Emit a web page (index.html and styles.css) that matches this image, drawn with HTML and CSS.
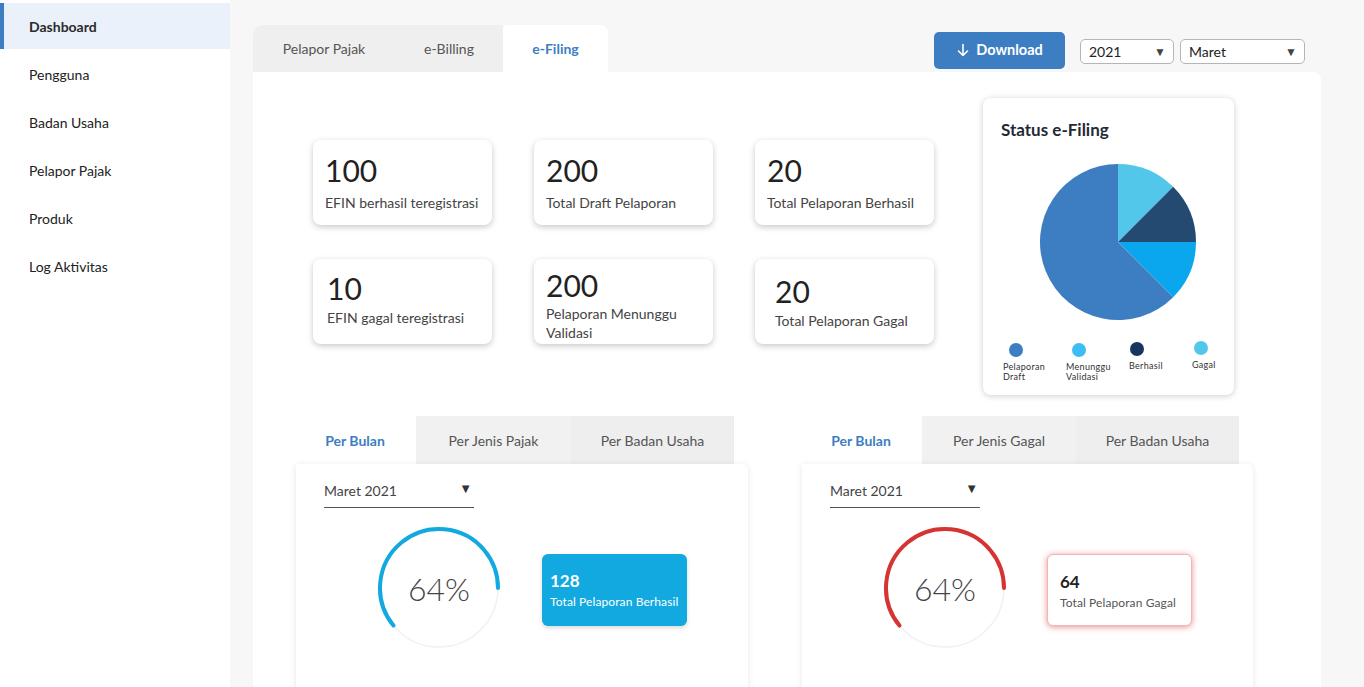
FILE: index.html
```html
<!DOCTYPE html>
<html lang="id">
<head>
<meta charset="utf-8">
<title>Dashboard e-Filing</title>
<link rel="stylesheet" href="styles.css">
</head>
<body>
<aside class="sidebar">
  <a class="nav-item active">Dashboard</a>
  <a class="nav-item">Pengguna</a>
  <a class="nav-item">Badan Usaha</a>
  <a class="nav-item">Pelapor Pajak</a>
  <a class="nav-item">Produk</a>
  <a class="nav-item">Log Aktivitas</a>
</aside>
<main class="main">
  <div class="topbar">
    <div class="tabs">
      <div class="tab t1">Pelapor Pajak</div>
      <div class="tab t2">e-Billing</div>
      <div class="tab active">e-Filing</div>
    </div>
    <div class="controls">
      <button class="btn-download">
        <svg width="14" height="14" viewBox="0 0 14 14" fill="none" stroke="#fff" stroke-width="1.6" stroke-linecap="round" stroke-linejoin="round"><path d="M7 1.5v11M2.5 8l4.5 4.5L11.5 8"/></svg>
        Download
      </button>
      <div class="select s-year">2021<span class="caret">▼</span></div>
      <div class="select s-month">Maret<span class="caret">▼</span></div>
    </div>
  </div>
  <section class="panel">
    <div class="top-section">
      <div class="stats">
        <div class="stat"><div class="num">100</div><div class="lbl">EFIN berhasil teregistrasi</div></div>
        <div class="stat"><div class="num">200</div><div class="lbl">Total Draft Pelaporan</div></div>
        <div class="stat"><div class="num">20</div><div class="lbl">Total Pelaporan Berhasil</div></div>
        <div class="stat s2"><div class="num">10</div><div class="lbl">EFIN gagal teregistrasi</div></div>
        <div class="stat s3"><div class="num">200</div><div class="lbl">Pelaporan Menunggu Validasi</div></div>
        <div class="stat s4"><div class="num">20</div><div class="lbl">Total Pelaporan Gagal</div></div>
      </div>
      <div class="status-card">
        <h2 class="status-title">Status e-Filing</h2>
        <svg class="pie" width="160" height="160" viewBox="0 0 160 160">
          <path d="M80 80 L80 2 A78 78 0 0 1 135.15 24.85 Z" fill="#52c7ea"/>
          <path d="M80 80 L135.15 24.85 A78 78 0 0 1 158 80 Z" fill="#244a72"/>
          <path d="M80 80 L158 80 A78 78 0 0 1 135.15 135.15 Z" fill="#0aa7ef"/>
          <path d="M80 80 L135.15 135.15 A78 78 0 1 1 80 2 Z" fill="#3d7ec2"/>
        </svg>
        <div class="legend">
          <div class="lg"><span class="dot" style="background:#3d7ec2"></span><span>Pelaporan<br>Draft</span></div>
          <div class="lg"><span class="dot" style="background:#3dbdf2"></span><span>Menunggu<br>Validasi</span></div>
          <div class="lg"><span class="dot" style="background:#17365f"></span><span>Berhasil</span></div>
          <div class="lg lg-last"><span class="dot" style="background:#52c7ea"></span><span>Gagal</span></div>
        </div>
      </div>
    </div>
    <div class="bottom-section">
      <div class="block">
        <div class="subtabs">
          <div class="subtab active">Per Bulan</div>
          <div class="subtab w155">Per Jenis Pajak</div>
          <div class="subtab w163 dark">Per Badan Usaha</div>
        </div>
        <div class="block-card">
          <div class="dropdown">Maret 2021<span class="dcaret">▼</span></div>
          <div class="gauge-row">
            <div class="gauge">
              <svg width="124" height="124" viewBox="0 0 124 124">
                <circle cx="62" cy="62" r="59" fill="none" stroke="#f1f1f1" stroke-width="1.5"/>
                <circle cx="62" cy="62" r="59" fill="none" stroke="#12a9e0" stroke-width="4" stroke-linecap="round" pathLength="100" stroke-dasharray="61 100" transform="rotate(140.5 62 62)"/>
              </svg>
              <span class="pct">64%</span>
            </div>
            <div class="info info-blue"><div class="inum">128</div><div class="ilbl">Total Pelaporan Berhasil</div></div>
          </div>
        </div>
      </div>
      <div class="block">
        <div class="subtabs">
          <div class="subtab active">Per Bulan</div>
          <div class="subtab w154">Per Jenis Gagal</div>
          <div class="subtab w163 dark">Per Badan Usaha</div>
        </div>
        <div class="block-card">
          <div class="dropdown">Maret 2021<span class="dcaret">▼</span></div>
          <div class="gauge-row">
            <div class="gauge">
              <svg width="124" height="124" viewBox="0 0 124 124">
                <circle cx="62" cy="62" r="59" fill="none" stroke="#f1f1f1" stroke-width="1.5"/>
                <circle cx="62" cy="62" r="59" fill="none" stroke="#d63333" stroke-width="4" stroke-linecap="round" pathLength="100" stroke-dasharray="61 100" transform="rotate(140.5 62 62)"/>
              </svg>
              <span class="pct">64%</span>
            </div>
            <div class="info info-red"><div class="inum">64</div><div class="ilbl">Total Pelaporan Gagal</div></div>
          </div>
        </div>
      </div>
    </div>
  </section>
</main>
</body>
</html>
```
FILE: styles.css
```css
* { box-sizing: border-box; }
html, body { margin: 0; padding: 0; }
body {
  background: #f7f7f7;
  font-family: Lato, "Noto Sans", "Liberation Sans", sans-serif;
  color: #333;
  display: flex;
  height: 687px;
  overflow: hidden;
}
.sidebar {
  width: 230px;
  flex: none;
  background: #fff;
  padding-top: 2px;
  display: flex;
  flex-direction: column;
}
.nav-item {
  height: 48px;
  display: flex;
  align-items: center;
  font-size: 14px;
  color: #222;
  border-left: 4px solid transparent;
  padding-left: 25px;
}
.nav-item.active {
  background: #eaf1fa;
  border-left-color: #3d7ec2;
  font-weight: 700;
  height: 46px;
  margin-top: 1px;
  margin-bottom: 1px;
  color: #2a2a2a;
}
.main {
  flex: none;
  width: 1091px;
  padding: 25px 0 0 23px;
  display: flex;
  flex-direction: column;
}
.topbar {
  display: flex;
  justify-content: space-between;
  height: 47px;
}
.tabs { display: flex; }
.tab {
  height: 47px;
  display: flex;
  align-items: center;
  justify-content: center;
  background: #efefef;
  font-size: 14px;
  color: #555;
}
.t1 { width: 142px; border-top-left-radius: 10px; }
.t2 { width: 108px; }
.tab.active {
  width: 105px;
  background: #fff;
  color: #3d7ec2;
  font-weight: 700;
  border-top-right-radius: 8px;
  border-top-left-radius: 4px;
}
.controls {
  display: flex;
  align-items: flex-start;
  padding-top: 7px;
  padding-right: 16px;
}
.btn-download {
  width: 131px;
  height: 37px;
  border: none;
  border-radius: 5px;
  background: #3d7ec2;
  color: #fff;
  font-family: inherit;
  font-size: 14.5px;
  font-weight: 700;
  display: flex;
  align-items: center;
  justify-content: center;
  gap: 6px;
  margin-right: 15px;
  padding-bottom: 3px;
}
.select {
  margin-top: 7px;
  height: 25px;
  border: 1px solid #b5b5b5;
  border-radius: 5px;
  background: #fff;
  font-size: 14px;
  color: #222;
  display: flex;
  align-items: center;
  justify-content: space-between;
  padding: 0 7px 0 8px;
}
.s-year { width: 94px; margin-right: 6px; }
.s-month { width: 125px; }
.caret { font-size: 12px; color: #444; }
.panel {
  width: 1068px;
  flex: 1;
  background: #fff;
  border-top-right-radius: 8px;
  padding: 26px 0 0 43px;
}
.top-section {
  display: flex;
  align-items: flex-start;
}
.stats {
  margin-top: 42px;
  margin-left: 17px;
  display: grid;
  grid-template-columns: repeat(3, 179px);
  grid-auto-rows: 85px;
  column-gap: 42px;
  row-gap: 34px;
}
.stat {
  background: #fff;
  border-radius: 8px;
  box-shadow: 0 2px 6px rgba(0,0,0,0.22);
  padding: 11px 0 0 12px;
}
.num {
  font-size: 30px;
  color: #222;
  line-height: 38px;
}
.lbl {
  font-size: 14px;
  color: #444;
  margin-top: 5px;
}
.s2 { padding-left: 14px; padding-top: 10px; }
.s2 .lbl { margin-top: 2px; }
.s3 { padding-top: 7px; }
.s3 .lbl { margin-top: 0; line-height: 19px; padding-right: 20px; }
.s4 { padding-left: 20px; padding-top: 13px; }
.s4 .lbl { margin-top: 2px; }
.status-card {
  width: 251px;
  height: 297px;
  margin-left: 49px;
  border-radius: 8px;
  box-shadow: 0 1px 6px rgba(0,0,0,0.2);
  padding: 20px 0 0 18px;
  display: flex;
  flex-direction: column;
}
.status-title {
  margin: 0;
  font-size: 17px;
  font-weight: 700;
  color: #1f2a36;
  line-height: 24px;
}
.pie { margin: 20px 0 0 37px; display: block; }
.legend {
  display: flex;
  margin-top: 21px;
  margin-left: 2px;
  font-size: 9px;
  color: #333;
  letter-spacing: 0.3px;
}
.lg {
  width: 63px;
  display: flex;
  flex-direction: column;
  line-height: 10px;
}
.lg-last { width: 30px; }
.dot {
  width: 14px;
  height: 14px;
  border-radius: 50%;
  margin: 0 0 5px 6px;
}
.lg:nth-child(3) .dot { margin-left: 1px; margin-top: -1px; }
.lg-last .dot { margin-left: 2px; margin-top: -2px; }
.bottom-section {
  display: flex;
  gap: 54px;
  margin-top: 21px;
}
.block { width: 452px; display: flex; flex-direction: column; }
.block + .block { width: 451px; }
.subtabs { display: flex; height: 48px; }
.subtab {
  display: flex;
  align-items: center;
  justify-content: center;
  background: #f1f1f1;
  font-size: 14px;
  color: #555;
}
.subtab.active {
  width: 120px;
  background: #fff;
  color: #3d7ec2;
  font-weight: 700;
  padding-right: 2px;
}
.w155 { width: 155px; }
.w154 { width: 154px; }
.w163 { width: 163px; }
.subtab.dark { background: #eeeeee; }
.block-card {
  height: 240px;
  background: #fff;
  border-radius: 0 6px 6px 6px;
  box-shadow: 0 1px 6px rgba(0,0,0,0.1);
  padding: 14px 0 0 28px;
}
.dropdown {
  width: 150px;
  height: 30px;
  border-bottom: 1.5px solid #555;
  font-size: 14px;
  color: #444;
  display: flex;
  justify-content: space-between;
  align-items: flex-start;
  padding-top: 4px;
}
.dcaret { font-size: 13px; color: #333; margin-right: 2px; margin-top: -2px; }
.gauge-row {
  display: flex;
  align-items: center;
  margin-top: 18px;
  margin-left: 53px;
}
.gauge {
  position: relative;
  width: 124px;
  height: 124px;
  display: flex;
  align-items: center;
  justify-content: center;
}
.gauge svg { position: absolute; left: 0; top: 0; }
.pct {
  font-size: 32px;
  color: #444;
  font-weight: 300;
  position: relative;
}
.info {
  margin-left: 41px;
  margin-top: 4px;
  width: 145px;
  height: 72px;
  border-radius: 6px;
  padding: 17px 0 0 8px;
}
.info-blue {
  background: #12a9e0;
  color: #fff;
  box-shadow: 0 2px 4px rgba(0,0,0,0.15);
}
.info-red {
  background: #fff;
  border: 1px solid #f1b5b5;
  box-shadow: 0 1px 6px rgba(214,51,51,0.55);
  padding-left: 12px;
  margin-left: 40px;
}
.inum { font-size: 17px; font-weight: 700; line-height: 20px; }
.info-red .inum { color: #222; }
.ilbl { font-size: 12px; margin-top: 3px; letter-spacing: 0.1px; }
.info-red .ilbl { color: #555; }
```
